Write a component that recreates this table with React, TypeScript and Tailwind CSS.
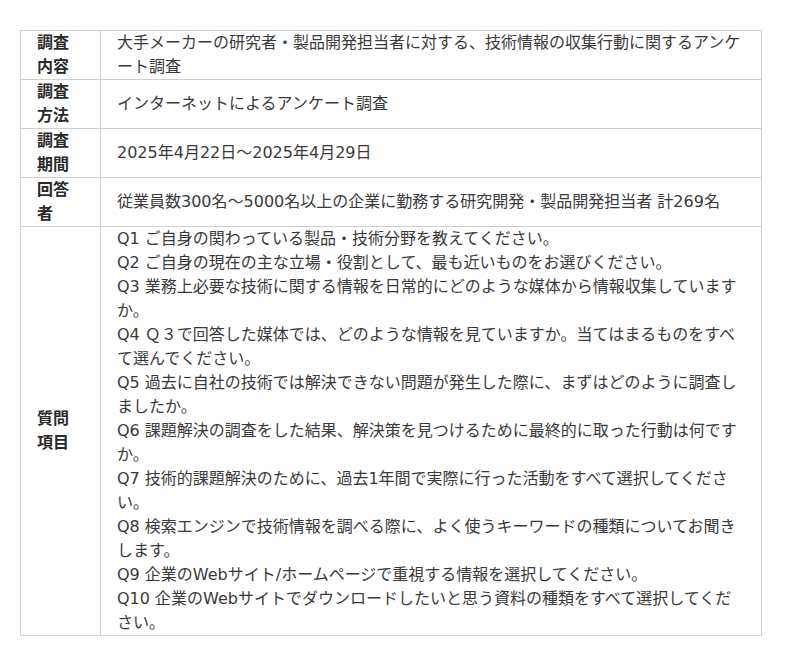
import React from 'react';

interface Row {
  label: string[];
  content: React.ReactNode;
}

const questions = [
  'Q1 ご自身の関わっている製品・技術分野を教えてください。',
  'Q2 ご自身の現在の主な立場・役割として、最も近いものをお選びください。',
  'Q3 業務上必要な技術に関する情報を日常的にどのような媒体から情報収集していますか。',
  'Q4 Ｑ３で回答した媒体では、どのような情報を見ていますか。当てはまるものをすべて選んでください。',
  'Q5 過去に自社の技術では解決できない問題が発生した際に、まずはどのように調査しましたか。',
  'Q6 課題解決の調査をした結果、解決策を見つけるために最終的に取った行動は何ですか。',
  'Q7 技術的課題解決のために、過去1年間で実際に行った活動をすべて選択してください。',
  'Q8 検索エンジンで技術情報を調べる際に、よく使うキーワードの種類についてお聞きします。',
  'Q9 企業のWebサイト/ホームページで重視する情報を選択してください。',
  'Q10 企業のWebサイトでダウンロードしたいと思う資料の種類をすべて選択してください。',
];

const rows: Row[] = [
  {
    label: ['調査', '内容'],
    content: '大手メーカーの研究者・製品開発担当者に対する、技術情報の収集行動に関するアンケート調査',
  },
  { label: ['調査', '方法'], content: 'インターネットによるアンケート調査' },
  { label: ['調査', '期間'], content: '2025年4月22日～2025年4月29日' },
  {
    label: ['回答', '者'],
    content: '従業員数300名～5000名以上の企業に勤務する研究開発・製品開発担当者 計269名',
  },
  {
    label: ['質問', '項目'],
    content: (
      <div>
        {questions.map((q, idx) => (
          <p key={idx}>{q}</p>
        ))}
      </div>
    ),
  },
];

export default function App() {
  return (
    <div
      className="min-h-[666px] bg-white pt-[30px] pl-[20px] text-[16px] leading-[24px] text-[#3a3a3a]"
      style={{ fontFamily: '"DejaVu Sans", "Noto Sans CJK JP", sans-serif' }}
    >
      <div className="w-[742px] border border-[#cfcfcf]">
        {rows.map((row, idx) => (
          <div key={idx} className={`flex ${idx > 0 ? 'border-t border-[#cfcfcf]' : ''}`}>
            <div className="flex w-[80px] shrink-0 flex-col justify-center border-r border-[#cfcfcf] pl-[16px] font-bold text-[#2a2a2a]">
              {row.label.map((l, i) => (
                <span key={i}>{l}</span>
              ))}
            </div>
            <div className="flex flex-1 items-center px-4">{row.content}</div>
          </div>
        ))}
      </div>
    </div>
  );
}
